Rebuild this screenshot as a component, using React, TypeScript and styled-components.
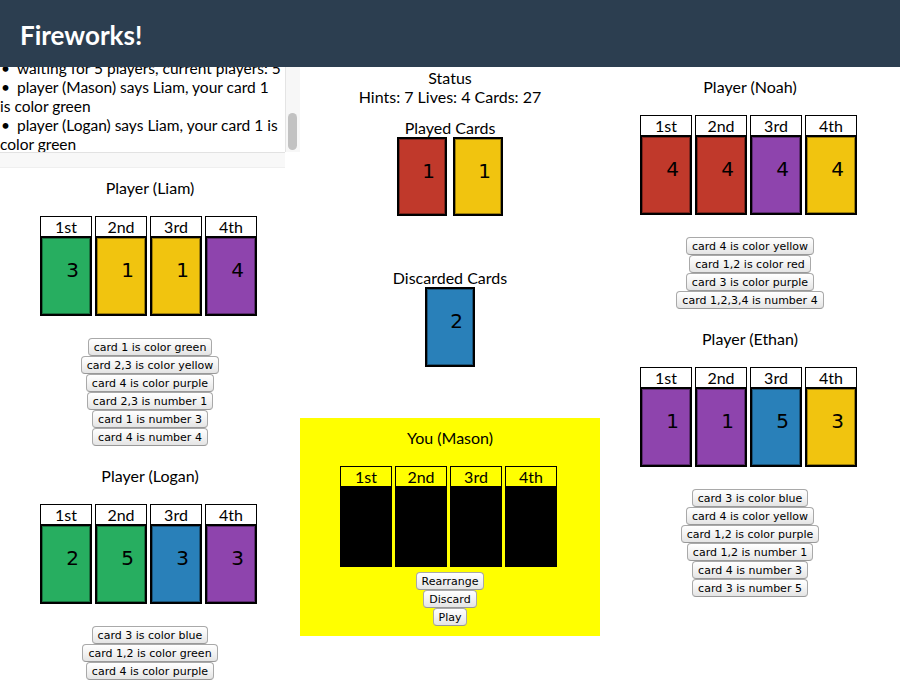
import React from "react";
import styled, { createGlobalStyle } from "styled-components";

const GlobalStyle = createGlobalStyle`
  html, body { margin: 0; padding: 0; background: #fff; }
  body { font-family: Lato, "Open Sans", sans-serif; color: #000; }
`;

const COLORS: Record<string, string> = {
  green: "#27ae60",
  yellow: "#f1c40f",
  purple: "#8e44ad",
  blue: "#2980b9",
  red: "#c0392b",
};

const Header = styled.header`
  height: 67px;
  background: #2c3e50;
  display: flex;
  align-items: center;
  padding: 3px 0 0 20px;
  box-sizing: border-box;
`;

const Brand = styled.h1`
  margin: 0;
  color: #fff;
  font: 700 26px/1 Lato, sans-serif;
`;

const Main = styled.main`
  display: grid;
  grid-template-columns: repeat(3, 300px);
  align-items: start;
`;

const Column = styled.div`
  display: flex;
  flex-direction: column;
  align-items: center;
`;

const LogBox = styled.div`
  align-self: stretch;
  display: grid;
  grid-template-columns: 285px 15px;
  grid-template-rows: 85px 16px;
`;

const LogViewport = styled.div`
  overflow: hidden;
  padding-right: 3px;
`;

const LogList = styled.ul`
  margin: -8px 0 0;
  padding: 0;
  list-style: none;
  font: 15.5px/19px Lato, sans-serif;
  color: #000;
`;

const LogItem = styled.li`
  &::before {
    content: "•";
    display: inline-block;
    width: 17px;
    padding-left: 1px;
    box-sizing: border-box;
  }
`;

const VTrack = styled.div`
  background: #f7f7f7;
  border-left: 1px solid #e4e4e4;
  padding: 46px 3px 0 2px;
`;

const Thumb = styled.div`
  height: 37px;
  border-radius: 5px;
  background: #c2c2c2;
`;

const HTrack = styled.div`
  background: #f8f8f8;
  border-top: 1px solid #e2e2e2;
  border-bottom: 1px solid #efefef;
`;

const Section = styled.section`
  display: flex;
  flex-direction: column;
  align-items: center;
  padding: 10px 0;
`;

const SectionTitle = styled.div`
  font: 16px/20px Lato, sans-serif;
`;

const Hand = styled.div`
  display: flex;
  gap: 3px;
  padding-right: 3px;
  margin-top: 18px;
`;

const Card = styled.div`
  width: 52px;
  display: flex;
  flex-direction: column;
`;

const CardLabel = styled.div<{ $mine?: boolean }>`
  height: 20px;
  box-sizing: border-box;
  border: 1px solid #000;
  border-bottom: none;
  background: ${(p) => (p.$mine ? "#ffff00" : "#fff")};
  font: 16px/20px Lato, sans-serif;
  text-align: center;
`;

const Face = styled.div<{ $color: string; $w: number; $h: number }>`
  width: ${(p) => p.$w}px;
  height: ${(p) => p.$h}px;
  box-sizing: border-box;
  border: 2px solid #000;
  box-shadow: inset 0 0 0 1px rgba(0, 0, 0, 0.35);
  background: ${(p) => p.$color};
  padding: 22px 0 0 13px;
  text-align: center;
  font: 20px/20px "DejaVu Sans", Verdana, sans-serif;
  color: #000;
`;

const HintList = styled.div`
  display: flex;
  flex-direction: column;
  align-items: center;
  margin-top: 22px;
`;

const Btn = styled.button`
  height: 18px;
  box-sizing: border-box;
  padding: 0 5px;
  border: 1px solid #a9a9a9;
  border-bottom-color: #999;
  border-radius: 4px;
  background: linear-gradient(#ffffff, #f3f3f3 50%, #e4e4e4);
  font: 11px/15px "DejaVu Sans", Verdana, sans-serif;
  color: #000;
  white-space: nowrap;
  cursor: pointer;
`;

const Info = styled.div<{ $top: number }>`
  margin-top: ${(p) => p.$top}px;
  font: 16px/19px Lato, sans-serif;
  text-align: center;
`;

const Row = styled.div`
  display: flex;
  gap: 6px;
`;

const YouBox = styled.div`
  align-self: stretch;
  margin-top: 51px;
  background: #ffff00;
  padding: 10px 0;
  display: flex;
  flex-direction: column;
  align-items: center;
`;

const Actions = styled.div`
  display: flex;
  flex-direction: column;
  align-items: center;
  margin-top: 5px;
`;

const LABELS = ["1st", "2nd", "3rd", "4th"];

type C = [string, number];

function PlayerHand({ cards }: { cards: C[] }) {
  return (
    <Hand>
      {cards.map(([c, n], i) => (
        <Card key={i}>
          <CardLabel>{LABELS[i]}</CardLabel>
          <Face $color={COLORS[c]} $w={52} $h={80}>
            {n}
          </Face>
        </Card>
      ))}
    </Hand>
  );
}

function Player({ name, cards, hints }: { name: string; cards: C[]; hints: string[] }) {
  return (
    <Section>
      <SectionTitle>Player ({name})</SectionTitle>
      <PlayerHand cards={cards} />
      <HintList>
        {hints.map((h) => (
          <Btn key={h}>{h}</Btn>
        ))}
      </HintList>
    </Section>
  );
}

export default function App() {
  return (
    <>
      <GlobalStyle />
      <Header>
        <Brand>Fireworks!</Brand>
      </Header>
      <Main>
        <Column>
          <LogBox>
            <LogViewport>
              <LogList>
                <LogItem>waiting for 5 players, current players: 5</LogItem>
                <LogItem>player (Mason) says Liam, your card 1 is color green</LogItem>
                <LogItem>player (Logan) says Liam, your card 1 is color green</LogItem>
              </LogList>
            </LogViewport>
            <VTrack>
              <Thumb />
            </VTrack>
            <HTrack />
            <div />
          </LogBox>
          <Player
            name="Liam"
            cards={[["green", 3], ["yellow", 1], ["yellow", 1], ["purple", 4]]}
            hints={[
              "card 1 is color green",
              "card 2,3 is color yellow",
              "card 4 is color purple",
              "card 2,3 is number 1",
              "card 1 is number 3",
              "card 4 is number 4",
            ]}
          />
          <Player
            name="Logan"
            cards={[["green", 2], ["green", 5], ["blue", 3], ["purple", 3]]}
            hints={["card 3 is color blue", "card 1,2 is color green", "card 4 is color purple"]}
          />
        </Column>
        <Column>
          <Info $top={1}>
            Status
            <br />
            Hints: 7 Lives: 4 Cards: 27
          </Info>
          <Info $top={12}>Played Cards</Info>
          <Row>
            <Face $color={COLORS.red} $w={50} $h={79}>1</Face>
            <Face $color={COLORS.yellow} $w={50} $h={79}>1</Face>
          </Row>
          <Info $top={52}>Discarded Cards</Info>
          <Row>
            <Face $color={COLORS.blue} $w={50} $h={80}>2</Face>
          </Row>
          <YouBox>
            <SectionTitle>You (Mason)</SectionTitle>
            <Hand>
              {LABELS.map((l) => (
                <Card key={l}>
                  <CardLabel $mine>{l}</CardLabel>
                  <Face $color="#000" $w={52} $h={81} />
                </Card>
              ))}
            </Hand>
            <Actions>
              <Btn>Rearrange</Btn>
              <Btn>Discard</Btn>
              <Btn>Play</Btn>
            </Actions>
          </YouBox>
        </Column>
        <Column>
          <Player
            name="Noah"
            cards={[["red", 4], ["red", 4], ["purple", 4], ["yellow", 4]]}
            hints={[
              "card 4 is color yellow",
              "card 1,2 is color red",
              "card 3 is color purple",
              "card 1,2,3,4 is number 4",
            ]}
          />
          <Player
            name="Ethan"
            cards={[["purple", 1], ["purple", 1], ["blue", 5], ["yellow", 3]]}
            hints={[
              "card 3 is color blue",
              "card 4 is color yellow",
              "card 1,2 is color purple",
              "card 1,2 is number 1",
              "card 4 is number 3",
              "card 3 is number 5",
            ]}
          />
        </Column>
      </Main>
    </>
  );
}
